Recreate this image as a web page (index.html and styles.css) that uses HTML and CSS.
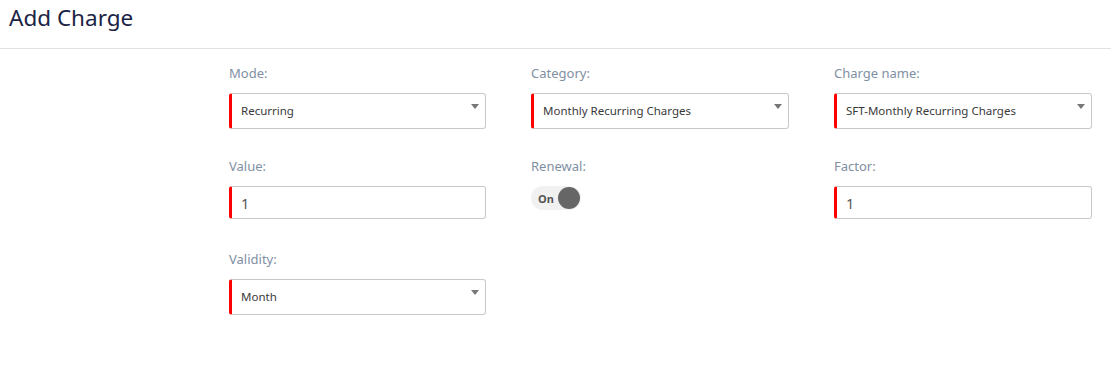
FILE: index.html
```html
<!DOCTYPE html>
<html>
<head>
<meta charset="utf-8">
<link rel="stylesheet" href="styles.css">
</head>
<body>
<header class="page-header">
  <h1 class="title">Add Charge</h1>
</header>
<main class="form">
  <div class="field">
    <label class="label">Mode:</label>
    <div class="control select"><span>Recurring</span><i class="caret"></i></div>
  </div>
  <div class="field">
    <label class="label">Category:</label>
    <div class="control select"><span>Monthly Recurring Charges</span><i class="caret"></i></div>
  </div>
  <div class="field">
    <label class="label">Charge name:</label>
    <div class="control select"><span>SFT-Monthly Recurring Charges</span><i class="caret"></i></div>
  </div>
  <div class="field">
    <label class="label">Value:</label>
    <div class="control input"><span>1</span></div>
  </div>
  <div class="field">
    <label class="label">Renewal:</label>
    <div class="toggle"><span class="toggle-text">On</span><span class="knob"></span></div>
  </div>
  <div class="field">
    <label class="label">Factor:</label>
    <div class="control input"><span>1</span></div>
  </div>
  <div class="field">
    <label class="label">Validity:</label>
    <div class="control select"><span>Month</span><i class="caret"></i></div>
  </div>
</main>
</body>
</html>
```

FILE: styles.css
```css
* { box-sizing: border-box; }
html, body { margin: 0; padding: 0; background: #fff; }
body {
  font-family: "Noto Sans", "Open Sans", sans-serif;
  width: 1111px;
  height: 379px;
  overflow: hidden;
}
.page-header {
  height: 49px;
  border-bottom: 1px solid #e2e2e2;
  padding: 4px 0 0 9px;
}
.title {
  margin: 0;
  font-size: 22.5px;
  font-weight: 400;
  line-height: 28px;
  color: #1b2345;
}
.form {
  display: grid;
  grid-template-columns: 257px 258px 258px;
  column-gap: 45px;
  padding: 14px 0 0 229px;
}
.field {
  display: flex;
  flex-direction: column;
  height: 93px;
}
.label {
  font-size: 13px;
  line-height: 20px;
  color: #7f8fa3;
  height: 30px;
}
.control {
  border: 1px solid #c8c8c8;
  border-left: 3px solid #f00;
  border-radius: 3px;
  display: flex;
  align-items: center;
  padding-left: 9px;
  color: #3a3a3a;
  position: relative;
}
.select {
  height: 36px;
  font-size: 11.5px;
  padding-bottom: 1px;
}
.input {
  height: 33px;
  font-size: 14.5px;
  color: #555;
}
.caret {
  position: absolute;
  right: 6px;
  top: 10px;
  width: 0;
  height: 0;
  border-left: 4px solid transparent;
  border-right: 4px solid transparent;
  border-top: 5px solid #777;
}
.toggle {
  width: 50px;
  height: 24px;
  margin-top: 0;
  border-radius: 12px;
  background: #f1f1f1;
  display: flex;
  align-items: center;
  justify-content: space-between;
  padding: 0 1px 0 7px;
}
.toggle-text {
  font-size: 11px;
  font-weight: 700;
  color: #555;
}
.knob {
  width: 22px;
  height: 22px;
  border-radius: 50%;
  background: #666;
}
```
